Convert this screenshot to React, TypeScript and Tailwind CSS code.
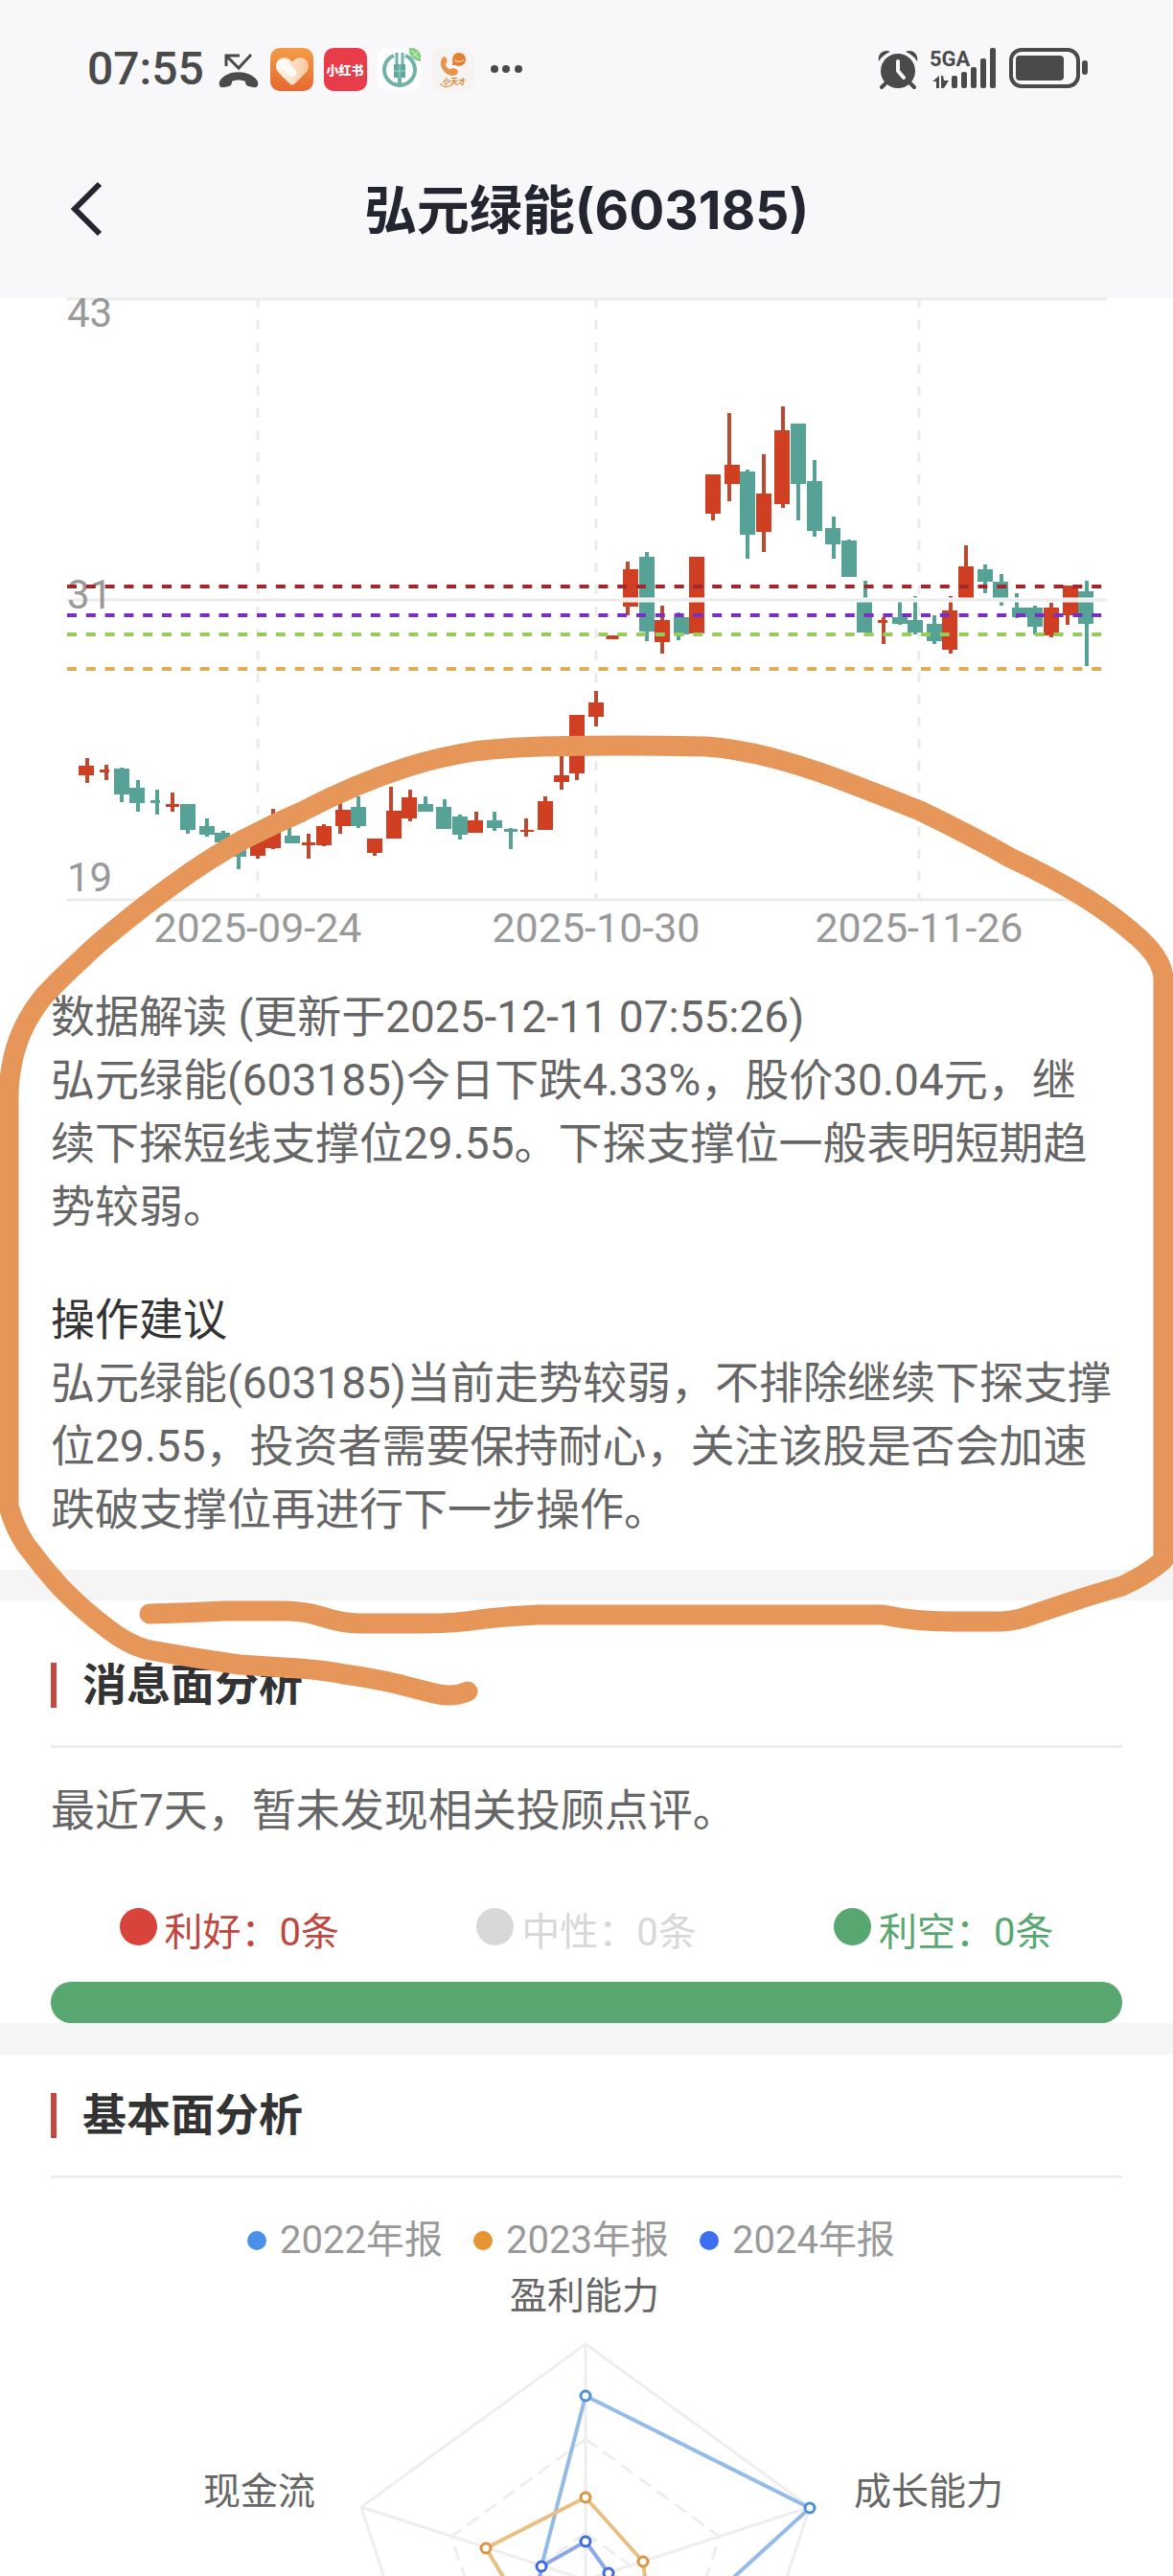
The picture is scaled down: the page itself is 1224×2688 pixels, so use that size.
import React from "react";

const RED = "#d03f22";
const GREEN = "#56a296";

// x, body width, open/close top, open/close bottom, wick x, high, low, up
type Candle = [
  number,
  number,
  number,
  number,
  number,
  number,
  number,
  boolean,
];

const candles: Candle[] = [
  [90, 16, 799, 809, 91, 791, 817, true],
  [109, 10, 803, 806, 111, 798, 814, true],
  [127, 16, 802, 829, 127, 801, 837, false],
  [143, 16, 822, 838, 144, 814, 847, false],
  [162, 10, 835, 838, 164, 824, 850, false],
  [180, 14, 839, 842, 180, 827, 847, true],
  [196, 16, 839, 866, 196, 839, 870, false],
  [216, 16, 862, 871, 216, 854, 873, false],
  [232, 16, 869, 879, 233, 867, 879, false],
  [249, 16, 880, 894, 249, 876, 907, false],
  [269, 16, 875, 893, 269, 870, 896, true],
  [285, 16, 866, 885, 285, 844, 886, true],
  [305, 16, 872, 880, 302, 846, 880, false],
  [322, 14, 879, 882, 322, 870, 896, true],
  [338, 16, 862, 882, 338, 860, 883, true],
  [358, 16, 845, 862, 355, 834, 870, true],
  [374, 16, 842, 862, 374, 831, 864, false],
  [391, 16, 875, 890, 391, 875, 893, true],
  [411, 16, 846, 875, 408, 821, 875, true],
  [427, 16, 832, 854, 428, 824, 857, true],
  [444, 16, 839, 847, 444, 831, 847, false],
  [463, 16, 842, 865, 464, 834, 865, false],
  [480, 16, 852, 871, 480, 850, 876, false],
  [496, 16, 856, 869, 497, 847, 869, true],
  [516, 16, 856, 864, 516, 847, 867, false],
  [533, 14, 865, 868, 533, 864, 886, false],
  [550, 14, 866, 868, 549, 854, 873, true],
  [569, 16, 836, 866, 569, 831, 866, true],
  [586, 16, 809, 816, 586, 785, 824, true],
  [602, 16, 746, 807, 602, 746, 814, true],
  [622, 16, 733, 748, 622, 721, 758, true],
  [639, 13, 663, 667, 639, 663, 667, true],
  [658, 16, 594, 633, 655, 586, 642, true],
  [675, 16, 581, 659, 675, 576, 669, false],
  [691, 16, 647, 670, 691, 632, 682, true],
  [711, 16, 644, 662, 708, 639, 668, false],
  [727, 16, 581, 661, 727, 581, 661, true],
  [744, 16, 495, 536, 744, 495, 543, true],
  [764, 16, 485, 505, 761, 431, 523, true],
  [780, 16, 492, 558, 780, 490, 583, false],
  [797, 16, 515, 555, 797, 474, 576, true],
  [816, 16, 449, 526, 817, 424, 530, true],
  [833, 16, 442, 505, 833, 442, 543, false],
  [850, 16, 502, 554, 850, 480, 560, false],
  [869, 16, 551, 568, 870, 539, 583, false],
  [886, 16, 564, 602, 886, 563, 602, false],
  [902, 16, 627, 660, 903, 606, 660, false],
  [921, 10, 647, 650, 922, 644, 672, true],
  [939, 16, 644, 651, 939, 627, 652, false],
  [955, 16, 647, 660, 955, 622, 662, false],
  [975, 16, 651, 669, 975, 642, 672, false],
  [991, 16, 637, 678, 992, 622, 682, true],
  [1008, 16, 591, 624, 1008, 569, 624, true],
  [1028, 16, 594, 607, 1028, 589, 619, false],
  [1044, 16, 607, 625, 1045, 599, 632, false],
  [1064, 16, 634, 644, 1061, 619, 645, false],
  [1080, 16, 634, 654, 1080, 632, 662, false],
  [1097, 16, 634, 663, 1097, 629, 665, true],
  [1117, 16, 611, 642, 1114, 611, 652, true],
  [1133, 16, 617, 651, 1134, 606, 695, false],
];

const levels = [
  { y: 612, color: "#a3262c" },
  { y: 642, color: "#7a2fc4" },
  { y: 662, color: "#97cc5a" },
  { y: 698, color: "#e0ac55" },
];

const dates = [
  { x: 269, label: "2025-09-24" },
  { x: 622, label: "2025-10-30" },
  { x: 959, label: "2025-11-26" },
];

const news = [
  { label: "利好：0条", dot: "bg-[#d8433b]", text: "text-[#c0473f]" },
  { label: "中性：0条", dot: "bg-[#d8d8d8]", text: "text-[#d8d8d8]" },
  { label: "利空：0条", dot: "bg-[#58a771]", text: "text-[#58a771]" },
];

const reports = [
  { label: "2022年报", dot: "bg-[#4a90e8]" },
  { label: "2023年报", dot: "bg-[#e79433]" },
  { label: "2024年报", dot: "bg-[#3c6ff0]" },
];

function StatusBar() {
  return (
    <div className="flex h-36 items-center justify-between pl-[91px] pr-[88px] text-[#4a4a4a]">
      <div className="flex items-center gap-[11px]">
        <span className="mr-1 text-[48px] leading-none font-medium">07:55</span>
        <svg width="42" height="46" viewBox="0 0 42 46" className="mr-px">
          <path
            d="M8 20V9h14M9 10l12 12L34 8"
            fill="none"
            stroke="currentColor"
            strokeWidth="3"
          />
          <path
            d="M1 36c-1 5 1 7 5 6l5-1c2-1 3-2 3-5 4-2 10-2 14 0 0 3 1 4 3 5l5 1c4 1 6-1 5-6-7-13-33-13-40 0z"
            fill="currentColor"
          />
        </svg>
        <svg width="45" height="45" viewBox="0 0 45 45">
          <defs>
            <linearGradient id="heartBg" x1="0" y1="0" x2="0" y2="1">
              <stop offset="0" stopColor="#f29c48" />
              <stop offset="1" stopColor="#e5692f" />
            </linearGradient>
            <linearGradient id="heartFill" x1="0" y1="0" x2="1" y2="0">
              <stop offset="0" stopColor="#fffaf4" />
              <stop offset="1" stopColor="#f7c79a" />
            </linearGradient>
          </defs>
          <rect width="45" height="45" rx="10" fill="url(#heartBg)" />
          <path
            d="M23 15c5-8 17-5 17 4 0 5-3 7-14 18-2 2-4 2-6 0C9 26 6 24 6 19c0-9 12-12 17-4z"
            fill="url(#heartFill)"
          />
          <path
            d="M14 17l9 9"
            stroke="#fff"
            strokeWidth="9"
            strokeLinecap="round"
            opacity="0.8"
          />
        </svg>
        <svg width="45" height="45" viewBox="0 0 45 45">
          <rect width="45" height="45" rx="10" fill="#e83c4a" />
          <text
            x="22"
            y="28"
            textAnchor="middle"
            fontSize="13"
            fontWeight="900"
            fill="#fff"
          >
            小红书
          </text>
        </svg>
        <svg width="45" height="45" viewBox="0 0 45 45">
          <rect width="45" height="45" rx="10" fill="#fff" />
          <g fill="none" stroke="#6fb3a6">
            <path
              d="M17 8a16 16 0 1 0 12 0"
              strokeWidth="4"
            />
            <path d="M20 5v14M26 5v14" strokeWidth="3" />
            <path d="M23 30v11" strokeWidth="4" />
          </g>
          <path d="M17 17h12v14H17z" fill="#5fa89b" />
          <path d="M17 24h12M23 17v14" stroke="#a9d8ce" strokeWidth="1" />
          <path d="M33 0h4c5 1 8 5 8 9v5C37 13 32 8 33 0z" fill="#84d183" />
          <path d="M36 3l7 8M42 4l-5 5" stroke="#e6f7e4" strokeWidth="1" />
        </svg>
        <svg width="45" height="45" viewBox="0 0 45 45">
          <rect width="45" height="45" rx="10" fill="#f5f4f3" />
          <circle cx="29" cy="12" r="7" fill="#e4802e" />
          <path d="M22 18l1-6 6 6z" fill="#e4802e" />
          <path
            d="M24 13q5 3 10 0"
            fill="none"
            stroke="#fff"
            strokeWidth="1"
          />
          <path
            d="M13 9c3 0 5 5 2 8 0 3 3 5 5 5 3-2 8 0 8 3-1 4-6 5-10 3-8-4-11-14-5-19z"
            fill="#e8944a"
          />
          <text
            x="24"
            y="38"
            textAnchor="middle"
            fontSize="8"
            fontWeight="700"
            fill="#dd8233"
          >
            小天才
          </text>
          <path
            d="M9 37q6 7 13 1"
            fill="none"
            stroke="#dd8233"
            strokeWidth="1"
          />
        </svg>
        <svg width="42" height="8" viewBox="0 0 42 8" className="ml-1">
          <circle cx="6" cy="4" r="4" fill="currentColor" />
          <circle cx="18" cy="4" r="4" fill="currentColor" />
          <circle cx="31" cy="4" r="4" fill="currentColor" />
        </svg>
      </div>

      <div className="flex items-center gap-3">
        <svg width="42" height="46" viewBox="0 0 42 46">
          <path
            d="M9 37l-5 5M33 37l5 5"
            stroke="currentColor"
            strokeWidth="4"
            strokeLinecap="round"
          />
          <path
            d="M1 15C-1 7 7 2 13 5 8 7 4 10 1 15zM41 15C43 7 35 2 29 5c5 2 9 5 12 10z"
            fill="currentColor"
          />
          <circle cx="21" cy="25" r="18" fill="currentColor" />
          <path
            d="M21 15v10l6 7"
            fill="none"
            stroke="#f8f8fa"
            strokeWidth="4"
            strokeLinecap="round"
          />
        </svg>
        <svg width="70" height="46" viewBox="0 0 70 46">
          <text
            x="0"
            y="20"
            fontSize="22"
            fontWeight="700"
            fill="currentColor"
          >
            5GA
          </text>
          <path
            d="M10 30v13H7v-7H3l7-6zM12 30h2l1 5h5l-5 8h-3z"
            fill="currentColor"
          />
          <g fill="currentColor">
            <rect x="23" y="30" width="6" height="13" rx="2" />
            <rect x="33" y="26" width="6" height="17" rx="2" />
            <rect x="43" y="21" width="6" height="22" rx="2" />
            <rect x="53" y="12" width="6" height="31" rx="2" />
            <rect x="63" y="1" width="6" height="42" rx="2" />
          </g>
        </svg>
        <svg width="84" height="46" viewBox="0 0 84 46">
          <rect
            x="3"
            y="3"
            width="70"
            height="38"
            rx="11"
            fill="none"
            stroke="currentColor"
            strokeWidth="4"
          />
          <rect x="8" y="9" width="50" height="26" rx="4" fill="currentColor" />
          <rect x="77" y="14" width="6" height="15" rx="3" fill="currentColor" />
        </svg>
      </div>
    </div>
  );
}

function KLineChart() {
  return (
    <svg viewBox="0 311 1224 717" className="block w-full overflow-visible">
      <g stroke="#ebebeb">
        <path d="M69 312H1155M69 939H1155" strokeWidth="3" />
        {dates.map((d) => (
          <path
            key={d.x}
            d={`M${d.x} 311V938`}
            strokeWidth="3"
            strokeDasharray="10 13"
          />
        ))}
      </g>
      {candles.map(([x, w, top, bottom, wick, high, low, up]) => (
        <g key={x} fill={up ? RED : GREEN}>
          <rect
            x={wick - 2}
            y={high}
            width="4"
            height={low - high}
            fill={up ? "#bb4a33" : GREEN}
          />
          <rect x={x - w / 2} y={top} width={w} height={bottom - top} />
        </g>
      ))}
      <path d="M69 626H1155" stroke="#fff" strokeWidth="5" />
      <path d="M69 626H1155" stroke="#ebebeb" strokeWidth="3" />
      <g fill="#999" fontSize="42">
        <text x="70" y="341">
          43
        </text>
        <text x="70" y="635">
          31
        </text>
        <text x="70" y="930">
          19
        </text>
        {dates.map((d) => (
          <text
            key={d.label}
            x={d.x}
            y="983"
            textAnchor="middle"
            fontSize="43"
          >
            {d.label}
          </text>
        ))}
      </g>
      {levels.map((l) => (
        <path
          key={l.y}
          d={`M70 ${l.y}H1150`}
          stroke={l.color}
          strokeWidth="4"
          strokeDasharray="10 9.8"
        />
      ))}
    </svg>
  );
}

function SectionTitle({ children }: { children: React.ReactNode }) {
  return (
    <div className="flex items-center gap-[27px] border-b-3 border-[#eee] pb-[30px]">
      <span className="h-[47px] w-[6px] bg-[#c2493f]" />
      <h2 className="text-[46px] leading-[66px] font-bold text-[#333]">
        {children}
      </h2>
    </div>
  );
}

function RadarChart() {
  return (
    <svg viewBox="0 2360 1224 328" className="block w-full">
      <g fill="none" stroke="#eee" strokeWidth="3">
        <path d="M611 2445L845 2615L755 2890H466L377 2615Z" />
        <path d="M611 2445V2691L845 2615M611 2691L377 2615" />
        <g strokeDasharray="15 8">
          <path d="M611 2544L751 2646L697 2810" />
          <path d="M611 2544L471 2646L525 2810" />
          <path d="M611 2642L658 2676L640 2731" />
          <path d="M611 2642L564 2676L582 2731" />
        </g>
      </g>
      <g fill="none" strokeWidth="4" strokeLinejoin="round">
        <path
          d="M720 2730L845 2616L611 2499L565 2677L560 2710"
          stroke="#94bbe6"
        />
        <path
          d="M677 2720L671 2672L611 2605L507 2658L542 2716"
          stroke="#e8c083"
        />
        <path
          d="M660 2720L635 2684L611 2651L565 2677L558 2720"
          stroke="#8ba8e8"
        />
      </g>
      <g fill="#fff" strokeWidth="3">
        <g stroke="#4f8fd3">
          <circle cx="611" cy="2499" r="5" />
          <circle cx="845" cy="2616" r="5" />
        </g>
        <g stroke="#db9440">
          <circle cx="611" cy="2605" r="5" />
          <circle cx="671" cy="2672" r="5" />
          <circle cx="507" cy="2658" r="5" />
        </g>
        <g stroke="#3f6cd8">
          <circle cx="611" cy="2651" r="5" />
          <circle cx="635" cy="2684" r="5" />
          <circle cx="565" cy="2677" r="5" />
        </g>
      </g>
      <g fill="#666" fontSize="39">
        <text x="610" y="2408" textAnchor="middle">
          盈利能力
        </text>
        <text x="329" y="2612" textAnchor="end">
          现金流
        </text>
        <text x="891" y="2612">
          成长能力
        </text>
      </g>
    </svg>
  );
}

// freehand marker drawn on top of the page
function MarkerStroke() {
  return (
    <svg
      viewBox="0 0 1224 2688"
      className="pointer-events-none absolute inset-x-0 top-0 w-full"
      fill="none"
      stroke="#e59658"
      strokeWidth="21"
      strokeLinecap="round"
      strokeLinejoin="round"
    >
      <path d="M156 1684Q195 1683 234 1681H297Q318 1681 336 1687Q358 1694 375 1694H445Q475 1694 500 1690Q530 1686 562 1685H921Q955 1692 991 1692H1046Q1062 1691 1077 1685L1116 1672Q1140 1664 1171 1655Q1195 1644 1214 1628V1020Q1212 998 1183 974Q1160 954 1131 936Q1095 914 1054 895Q1010 870 960 846Q925 832 891 819Q850 803 814 793Q775 782 737 779Q650 777 564 779Q528 780 495 784Q458 790 426 800Q370 818 315 847Q285 860 254 876Q218 896 185 920Q150 945 120 970Q100 986 86 1000Q66 1018 47 1038Q22 1068 14 1103Q9 1125 9 1143V1571Q14 1592 27 1612Q44 1635 62 1655Q86 1680 113 1700Q132 1715 152 1721Q195 1729 250 1737L312 1741Q340 1743 359 1747Q388 1751 414 1757L453 1767Q472 1772 488 1765" />
    </svg>
  );
}

function App() {
  return (
    <div className="relative overflow-hidden bg-white font-['Roboto','Noto_Sans_CJK_SC',sans-serif] text-[#666]">
      <header className="bg-[#f8f8fa] pb-[17px]">
        <StatusBar />
        <div className="relative flex h-[150px] items-center justify-center">
          <button
            aria-label="返回"
            className="absolute left-[70px] text-[#232530]"
          >
            <svg width="40" height="60" viewBox="0 0 40 60">
              <path
                d="M34 3L8 29L34 55"
                fill="none"
                stroke="currentColor"
                strokeWidth="6"
              />
            </svg>
          </button>
          <h1 className="font-['Inter','Noto_Sans_CJK_SC',sans-serif] text-[55px] font-bold text-[#232530]">
            弘元绿能(603185)
          </h1>
        </div>
      </header>

      <main>
        <section>
          <KLineChart />
          <div className="pr-[58px] pb-[30px] pl-[53px] text-[46px] leading-[66px]">
            <p>数据解读 (更新于2025-12-11 07:55:26)</p>
            <p>
              弘元绿能(603185)今日下跌4.33%，股价30.04元，继续下探短线支撑位29.55。下探支撑位一般表明短期趋势较弱。
            </p>
            <h3 className="mt-[52px] text-[#333]">操作建议</h3>
            <p>
              弘元绿能(603185)当前走势较弱，不排除继续下探支撑位29.55，投资者需要保持耐心，关注该股是否会加速跌破支撑位再进行下一步操作。
            </p>
          </div>
        </section>

        <section className="border-t-32 border-[#f5f5f5] px-[53px] pt-[55px]">
          <SectionTitle>消息面分析</SectionTitle>
          <p className="pt-[32px] text-[46px] leading-[66px]">
            最近7天，暂未发现相关投顾点评。
          </p>
          <ul className="mt-[69px] grid grid-cols-3 text-[40px] leading-[46px]">
            {news.map((n) => (
              <li
                key={n.label}
                className={`flex justify-center gap-2 ${n.text}`}
              >
                <span className={`size-[39px] rounded-full ${n.dot}`} />
                <span className="pt-[3px]">{n.label}</span>
              </li>
            ))}
          </ul>
          <div className="mt-[28px] h-[43px] rounded-[21px] bg-[#58a771]" />
        </section>

        <section className="border-t-33 border-[#f5f5f5] pt-[30px]">
          <div className="px-[53px]">
            <SectionTitle>基本面分析</SectionTitle>
          </div>
          <ul className="mt-[42px] flex justify-center text-[40px] leading-[46px] text-[#999]">
            {reports.map((r) => (
              <li key={r.label} className="mr-8 flex items-center gap-[14px]">
                <span className={`size-5 rounded-full ${r.dot}`} />
                {r.label}
              </li>
            ))}
          </ul>
          <RadarChart />
        </section>
      </main>

      <MarkerStroke />
    </div>
  );
}

export default App;
